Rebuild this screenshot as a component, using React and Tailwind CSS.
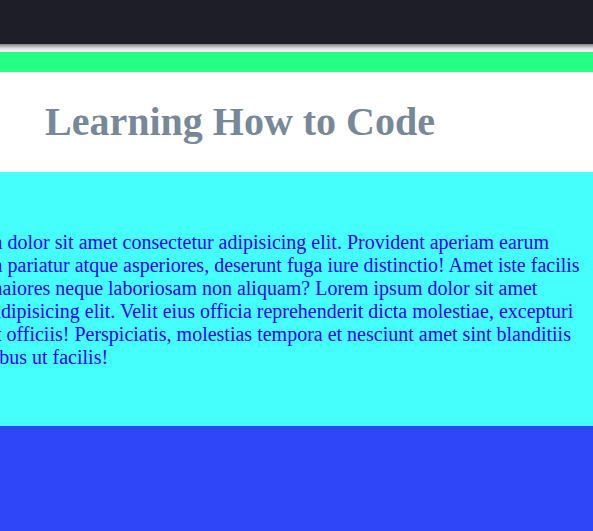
const lines = [
  "m dolor sit amet consectetur adipisicing elit. Provident aperiam earum",
  "m pariatur atque asperiores, deserunt fuga iure distinctio! Amet iste facilis",
  "maiores neque laboriosam non aliquam? Lorem ipsum dolor sit amet",
  " adipisicing elit. Velit eius officia reprehenderit dicta molestiae, excepturi",
  "et officiis! Perspiciatis, molestias tempora et nesciunt amet sint blanditiis",
  "ribus ut facilis!",
];

export default function App() {
  return (
    <div className="flex min-h-screen flex-col overflow-hidden bg-[#2f46f8] font-['Liberation_Serif','Times_New_Roman',serif]">
      <header className="z-10 -mx-4 h-11 bg-[#1e1e28] shadow-[0_0_8px_#000000]" />
      <div className="h-7 border-t-8 border-white bg-[#26ff85]" />
      <div className="bg-white px-[45px] py-7">
        <h1 className="text-[40px] leading-11 font-bold whitespace-nowrap text-[#778899]">
          Learning How to Code
        </h1>
      </div>
      <main className="bg-[#45fffc] pt-[59px] pb-[57px]">
        <p className="-ml-[13px] text-[20px] leading-[23px] whitespace-pre text-[#2e00ff]">
          {lines.map((line) => (
            <span key={line} className="block">
              {line}
            </span>
          ))}
        </p>
      </main>
    </div>
  );
}
